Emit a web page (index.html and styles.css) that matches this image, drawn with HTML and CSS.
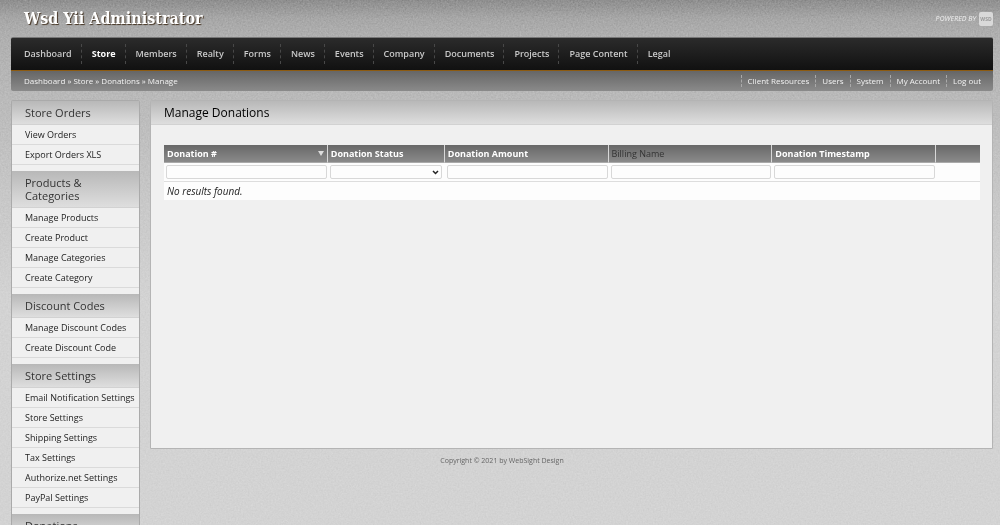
FILE: index.html
```html
<!DOCTYPE html>
<html lang="en">
<head>
<meta charset="utf-8">
<title>Wsd Yii Administrator</title>
<link rel="stylesheet" href="styles.css">
</head>
<body>
<svg class="grain" aria-hidden="true"><filter id="noise" color-interpolation-filters="sRGB"><feTurbulence type="fractalNoise" baseFrequency="0.6" numOctaves="2" seed="4"/><feColorMatrix values="0.5 0.5 0 0 0  0.5 0.5 0 0 0  0.5 0.5 0 0 0  0 0 0 0 1"/></filter><rect width="100%" height="100%" filter="url(#noise)"/></svg>
<div class="page">
  <header class="top">
    <h1 class="brand">Wsd Yii Administrator</h1>
    <a class="powered" href="#">POWERED BY <span class="badge">WSD</span></a>
  </header>
  <nav class="main-nav" aria-label="Main">
    <a href="#">Dashboard</a><a class="active" href="#">Store</a><a href="#">Members</a><a href="#">Realty</a><a href="#">Forms</a><a href="#">News</a><a href="#">Events</a><a href="#">Company</a><a href="#">Documents</a><a href="#">Projects</a><a href="#">Page Content</a><a href="#">Legal</a>
  </nav>
  <div class="sub-bar">
    <nav class="crumbs" aria-label="Breadcrumb"><a href="#">Dashboard</a> » <a href="#">Store</a> » <a href="#">Donations</a> » <span>Manage</span></nav>
    <nav class="user-nav" aria-label="Account"><a href="#">Client Resources</a><a href="#">Users</a><a href="#">System</a><a href="#">My Account</a><a href="#">Log out</a></nav>
  </div>
  <div class="columns">
    <aside class="sidebar">
      <section><h2>Store Orders</h2><ul><li><a href="#">View Orders</a></li><li><a href="#">Export Orders XLS</a></li></ul></section>
      <section><h2>Products &amp; Categories</h2><ul><li><a href="#">Manage Products</a></li><li><a href="#">Create Product</a></li><li><a href="#">Manage Categories</a></li><li><a href="#">Create Category</a></li></ul></section>
      <section><h2>Discount Codes</h2><ul><li><a href="#">Manage Discount Codes</a></li><li><a href="#">Create Discount Code</a></li></ul></section>
      <section><h2>Store Settings</h2><ul><li><a href="#">Email Notification Settings</a></li><li><a href="#">Store Settings</a></li><li><a href="#">Shipping Settings</a></li><li><a href="#">Tax Settings</a></li><li><a href="#">Authorize.net Settings</a></li><li><a href="#">PayPal Settings</a></li></ul></section>
      <section><h2>Donations</h2></section>
    </aside>
    <div class="body">
      <main class="panel">
        <h2 class="panel-title">Manage Donations</h2>
        <div class="panel-content">
          <table class="grid">
            <colgroup><col><col class="status"><col><col><col><col class="actions"></colgroup>
            <thead>
              <tr class="heads">
                <th><a class="sorted" href="#">Donation #<svg class="caret" viewBox="0 0 6 5" aria-hidden="true"><path d="M0 0h6L3 5z"/></svg></a></th>
                <th><a href="#">Donation Status</a></th>
                <th><a href="#">Donation Amount</a></th>
                <th class="plain">Billing Name</th>
                <th><a href="#">Donation Timestamp</a></th>
                <th></th>
              </tr>
              <tr class="filters">
                <td><input type="text" aria-label="Donation #"></td>
                <td><div class="select"><select aria-label="Donation Status"><option></option></select><svg viewBox="0 0 7 5" aria-hidden="true"><path d="M1 1l2.500 2.500L6 1"/></svg></div></td>
                <td><input type="text" aria-label="Donation Amount"></td>
                <td><input type="text" aria-label="Billing Name"></td>
                <td><input type="text" aria-label="Donation Timestamp"></td>
                <td></td>
              </tr>
            </thead>
            <tbody><tr><td class="empty" colspan="6">No results found.</td></tr></tbody>
          </table>
        </div>
      </main>
      <footer class="footer">Copyright © 2021 by WebSight Design</footer>
    </div>
  </div>
</div>
</body>
</html>
```
FILE: styles.css
```css
* { box-sizing: border-box; }
html { background: #d3d3d3; }
body {
  margin: 0;
  height: 100vh;
  overflow: hidden;
  position: relative;
  font: 8px/12px "Open Sans", sans-serif;
  color: #222;
  background: linear-gradient(#8e8e8e 0, #a6a6a6 18px, #afafaf 36px, #bababa 100px, #c8c8c8 200px, #d3d3d3 300px);
}
a { color: inherit; text-decoration: none; }
h1, h2, ul { margin: 0; padding: 0; }
ul { list-style: none; }
.grain { position: absolute; inset: 0; width: 100%; height: 100%; opacity: .25; mix-blend-mode: overlay; }
.page { position: relative; padding: 0 7px 0 11px; }
.top { display: flex; align-items: center; justify-content: space-between; height: 37px; padding-left: 13px; }
.brand { font: bold 16px/22px "DejaVu Serif Condensed", "DejaVu Serif", serif; font-stretch: condensed; color: #fff; text-shadow: 1px 1px 1px #432; }
.powered { display: flex; align-items: center; gap: 3px; font-size: 7px; font-style: italic; color: #eee; }
.badge { width: 14px; height: 14px; border-radius: 2px; background: #d9d9d9; color: #999; font: bold 5px/14px "Open Sans", sans-serif; text-align: center; }
.main-nav { display: flex; align-items: center; height: 34px; padding-left: 3px; border-top: 1px solid #777; border-bottom: 1px solid #8c5a10; border-radius: 2px 2px 0 0; background: linear-gradient(#2b2b2b, #111); color: #c8c8c8; font-size: 9px; font-weight: 600; }
.main-nav a { padding: 4px 9px 4px 10px; }
.main-nav a + a { border-left: 1px dashed #484848; }
.main-nav .active { color: #fff; font-weight: 700; }
.sub-bar { display: flex; align-items: center; justify-content: space-between; height: 20px; padding: 0 6px 0 13px; border-radius: 0 0 2px 2px; background: linear-gradient(#666, #8a8a8a); color: #f2f2f2; font-weight: 500; }
.user-nav { display: flex; }
.user-nav a { padding: 0 6px; border-left: 1px dashed #aaa; }
.columns { display: flex; gap: 10px; padding-top: 9px; }
.sidebar { flex: 0 0 129px; border: 1px solid #aaa; border-radius: 2px 2px 0 0; background: #f0f0f0; }
.sidebar section { padding-bottom: 6px; }
.sidebar h2 { padding: 5px 28px 5px 13px; border-bottom: 1px solid #d2d2d2; background: linear-gradient(#b8b8b8, #dedede); color: #333; font-size: 11px; font-weight: 400; line-height: 13px; }
.sidebar li { height: 20px; padding-left: 13px; border-bottom: 1px solid #dadada; font-size: 9px; line-height: 19px; white-space: nowrap; }
.body { flex: 1; min-width: 0; }
.panel { min-height: 349px; border: 1px solid #b4b4b4; border-radius: 2px 2px 0 0; background: #f0f0f0; }
.panel-title { height: 24px; padding-left: 13px; border-bottom: 1px solid #d2d2d2; background: linear-gradient(#b8b8b8, #dedede); color: #000; font-size: 12px; font-weight: 400; line-height: 24px; }
.panel-content { padding: 20px 12px 20px 13px; }
.grid { width: 100%; table-layout: fixed; border-collapse: separate; border-spacing: 0; background: #fdfdfd; }
.grid .status { width: 117px; }
.grid .actions { width: 44px; }
.grid th { height: 18px; padding: 0 3px; border-right: 1px solid #d8d8d8; border-bottom: 1px solid #aaa; background: linear-gradient(#686868, #8a8a8a); color: #fff; font-size: 9px; font-weight: 700; line-height: 16px; text-align: left; }
.grid th:last-child { border-right: 0; }
.grid .plain { color: #333; font-weight: 500; }
.sorted { display: flex; align-items: center; justify-content: space-between; }
.caret { width: 6px; height: 5px; fill: #ddd; }
.filters td { height: 19px; padding: 2px 1px 2px 2px; border-bottom: 1px solid #ddd; }
.grid input, .grid select { display: block; width: 100%; height: 14px; margin: 0; padding: 0 2px; border: 1px solid #d8d8d8; border-radius: 2px; background: #fdfdfd; font: 8px "Open Sans", sans-serif; }
.select { position: relative; margin-right: 2px; }
.select select { appearance: none; }
.select svg { position: absolute; right: 3px; top: 5px; width: 7px; height: 5px; fill: none; stroke: #222; stroke-width: 1.500; pointer-events: none; }
.grid .empty { height: 18px; padding: 0 3px; font-size: 10px; font-style: italic; line-height: 18px; }
.footer { margin-left: -139px; padding-top: 6px; color: #666; font-size: 7px; text-align: center; }
```
